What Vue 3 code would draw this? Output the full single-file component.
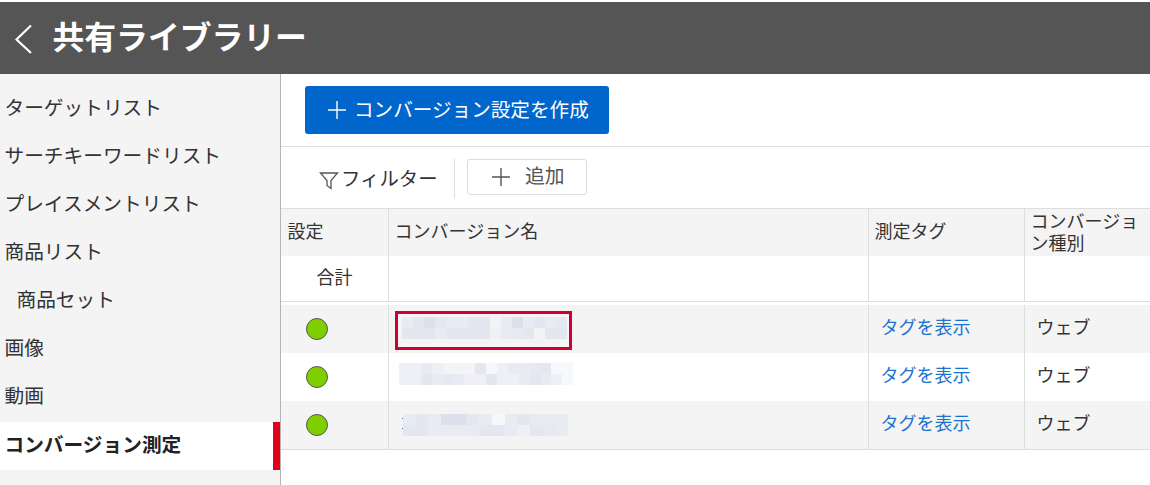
<script setup>
const navItems = [
  { label: 'ターゲットリスト' },
  { label: 'サーチキーワードリスト' },
  { label: 'プレイスメントリスト' },
  { label: '商品リスト' },
  { label: '商品セット', sub: true },
  { label: '画像' },
  { label: '動画' },
  { label: 'コンバージョン測定', active: true },
]

const C = { a: '#e9ebf2', b: '#e4e7f0', c: '#eef0f5', d: '#f4f4f7', e: '#dde0ec', f: '#e7e9f1', w: '#f7f7f8', x: '#f6f8fc' }
const toCells = (pattern) => pattern.split('').map((k) => C[k])

const rows = [
  { id: 1, blurClass: 'blur-one', cells: toCells('abebaabbdaeabaf' + 'bbbabbbbcafbdbb'), outlined: true },
  { id: 2, blurClass: 'blur-two', cells: toCells('ccacdddbxcaafbxx' + 'ccbafaccbccabacx'), },
  { id: 3, blurClass: 'blur-three', cells: toCells('abaeebawabaaa' + 'bbaaaabbacbfa'), speck: true },
]
</script>

<template>
  <div class="page">
    <header class="topbar">
      <svg class="back" width="20" height="32" viewBox="0 0 20 32" aria-hidden="true">
        <path d="M17 2.5 L2.5 16.5 L17 30" fill="none" stroke="#fff" stroke-width="2.2" />
      </svg>
      <h1 class="title">共有ライブラリー</h1>
    </header>

    <div class="body">
      <nav class="side">
        <div
          v-for="item in navItems"
          :key="item.label"
          class="nav-item"
          :class="{ sub: item.sub, active: item.active }"
        >{{ item.label }}</div>
      </nav>

      <main class="main">
        <div class="create-bar">
          <button class="create-btn" type="button">
            <svg width="20" height="20" viewBox="0 0 20 20" aria-hidden="true">
              <path d="M10 1V19M1 10H19" stroke="#fff" stroke-width="1.4" fill="none" />
            </svg>
            <span>コンバージョン設定を作成</span>
          </button>
        </div>

        <div class="filter-bar">
          <div class="filter">
            <svg width="20" height="20" viewBox="0 0 20 20" aria-hidden="true">
              <path d="M1.5 3H18.5L12 10.5V18.5L8 15.5V10.5Z" fill="none" stroke="#555" stroke-width="1.3" />
            </svg>
            <span>フィルター</span>
          </div>
          <button class="add-btn" type="button">
            <svg width="20" height="20" viewBox="0 0 20 20" aria-hidden="true">
              <path d="M10 1V19M1 10H19" stroke="#555" stroke-width="1.4" fill="none" />
            </svg>
            <span>追加</span>
          </button>
        </div>

        <div class="table">
          <div class="tr head">
            <div class="td c1">設定</div>
            <div class="td c2">コンバージョン名</div>
            <div class="td c3">測定タグ</div>
            <div class="td c4 wrap">コンバージョン種別</div>
          </div>
          <div class="tr total">
            <div class="td c1 total-label">合計</div>
            <div class="td c2"></div>
            <div class="td c3"></div>
            <div class="td c4"></div>
          </div>
          <div class="tr-gap"></div>
          <div v-for="(row, i) in rows" :key="row.id" class="tr data" :class="{ odd: i % 2 === 0 }">
            <div class="td c1 dot-cell"><span class="dot"></span></div>
            <div class="td c2 name-cell">
              <span v-if="row.outlined" class="outline"></span>
              <span v-if="row.speck" class="speck"></span>
              <div class="blur" :class="row.blurClass">
                <i v-for="(color, n) in row.cells" :key="n" :style="{ background: color }"></i>
              </div>
            </div>
            <div class="td c3 link">タグを表示</div>
            <div class="td c4 kind">ウェブ</div>
          </div>
        </div>
      </main>
    </div>
  </div>
</template>

<style>
html, body { margin: 0; padding: 0; background: #fff; }
</style>

<style scoped>
.page {
  width: 1150px;
  height: 485px;
  overflow: hidden;
  padding-top: 2px;
  box-sizing: border-box;
  display: flex;
  flex-direction: column;
  font-family: "Noto Sans CJK JP", "Noto Sans", sans-serif;
  color: #333;
  background: #fff;
}
.topbar {
  height: 72px;
  flex: none;
  background: #555;
  display: flex;
  align-items: center;
  padding-left: 14px;
  box-sizing: border-box;
}
.back { margin-top: 2px; }
.title {
  margin: 0 0 0 18.5px;
  font-size: 31.8px;
  line-height: 40px;
  font-weight: 700;
  color: #fff;
  position: relative;
  top: -3px;
}
.body { flex: 1; display: flex; min-height: 0; }
.side {
  width: 281px;
  flex: none;
  box-sizing: border-box;
  background: #f4f4f4;
  border-right: 1px solid #b5b5b5;
  padding-top: 12px;
}
.nav-item {
  height: 48px;
  line-height: 42px;
  font-size: 19.7px;
  padding-left: 4.5px;
  white-space: nowrap;
  color: #333;
  box-sizing: border-box;
}
.nav-item.sub { padding-left: 16.5px; }
.nav-item.active {
  background: #fff;
  font-weight: 700;
  line-height: 44px;
  color: #222;
  border-right: 7px solid #e00018;
}
.main { flex: 1; min-width: 0; display: flex; flex-direction: column; }
.create-bar {
  height: 73px;
  box-sizing: border-box;
  padding: 12px 0 0 24px;
  border-bottom: 1px solid #ddd;
}
.create-btn {
  width: 304px;
  height: 48px;
  border: 0;
  border-radius: 3px;
  background: #0066cc;
  color: #fff;
  display: flex;
  align-items: center;
  gap: 7px;
  padding: 0 0 0 22px;
  font: inherit;
  font-size: 19.6px;
  white-space: nowrap;
}
.create-btn span { position: relative; top: -2px; }
.filter-bar {
  height: 61px;
  box-sizing: border-box;
  padding: 12px 0 0 38px;
  display: flex;
  align-items: flex-start;
}
.filter {
  width: 135px;
  height: 40px;
  display: flex;
  align-items: center;
  font-size: 19.4px;
  color: #333;
  border-right: 1px solid #ddd;
  margin-right: 12px;
  white-space: nowrap;
}
.filter svg { margin-right: 2px; margin-top: 1px; }
.filter span { position: relative; top: -2px; }
.add-btn {
  width: 120px;
  height: 36px;
  box-sizing: border-box;
  border: 1px solid #ddd;
  border-radius: 3px;
  background: #fff;
  color: #555;
  display: flex;
  align-items: center;
  gap: 14px;
  padding: 0 0 0 23px;
  font: inherit;
  font-size: 19.8px;
}
.add-btn span { position: relative; top: -3px; }
.table { border-top: 1px solid #ddd; }
.tr { display: flex; }
.tr-gap { height: 4px; border-top: 1px solid #ddd; box-sizing: border-box; }
.td {
  box-sizing: border-box;
  border-right: 1px solid #ddd;
  display: flex;
  align-items: center;
  font-size: 18px;
  color: #333;
  position: relative;
  white-space: nowrap;
  padding-bottom: 6px;
}
.c1 { width: 108px; padding-left: 6.5px; }
.c2 { width: 480px; padding-left: 5.5px; }
.c3 { width: 156px; padding-left: 5.5px; }
.c4 { flex: 1; padding-left: 5.5px; border-right: 0; }
.wrap {
  display: block;
  white-space: normal;
  line-height: 22px;
  word-break: break-all;
  padding-bottom: 0;
}
.head { height: 47px; background: #f4f4f4; }
.total { height: 45px; background: #fff; }
.total-label { padding-left: 35.5px; }
.data { height: 48px; background: #fff; }
.data.odd { background: #f4f4f4; }
.data:last-child { border-bottom: 1px solid #ddd; }
.dot-cell { padding-bottom: 0; }
.dot {
  width: 22px;
  height: 22px;
  border-radius: 50%;
  box-sizing: border-box;
  border: 1.5px solid #555;
  background: #7fcf00;
  margin-left: 18.5px;
}
.name-cell { padding-left: 0; }
.blur {
  position: absolute;
  display: grid;
  grid-auto-rows: 11px;
  filter: blur(0.5px);
}
.blur i { display: block; }
.blur-one { left: 13px; top: 12px; grid-template-columns: repeat(15, 11px); }
.blur-two { left: 10px; top: 10px; grid-template-columns: repeat(16, 10.9px); }
.blur-three { left: 14px; top: 13px; grid-template-columns: repeat(13, 12.7px); }
.outline {
  position: absolute;
  left: 6px;
  top: 6px;
  width: 177px;
  height: 39px;
  box-sizing: border-box;
  border: 3px solid #cc0033;
  z-index: 1;
}
.speck {
  position: absolute;
  left: 13px;
  top: 17px;
  width: 1px;
  height: 1px;
  background: #2a6fd0;
  box-shadow: 0 10px 0 #2a6fd0;
  z-index: 1;
}
.link { color: #1a73d0; padding-left: 11.5px; }
.kind { padding-left: 11.5px; }
</style>
